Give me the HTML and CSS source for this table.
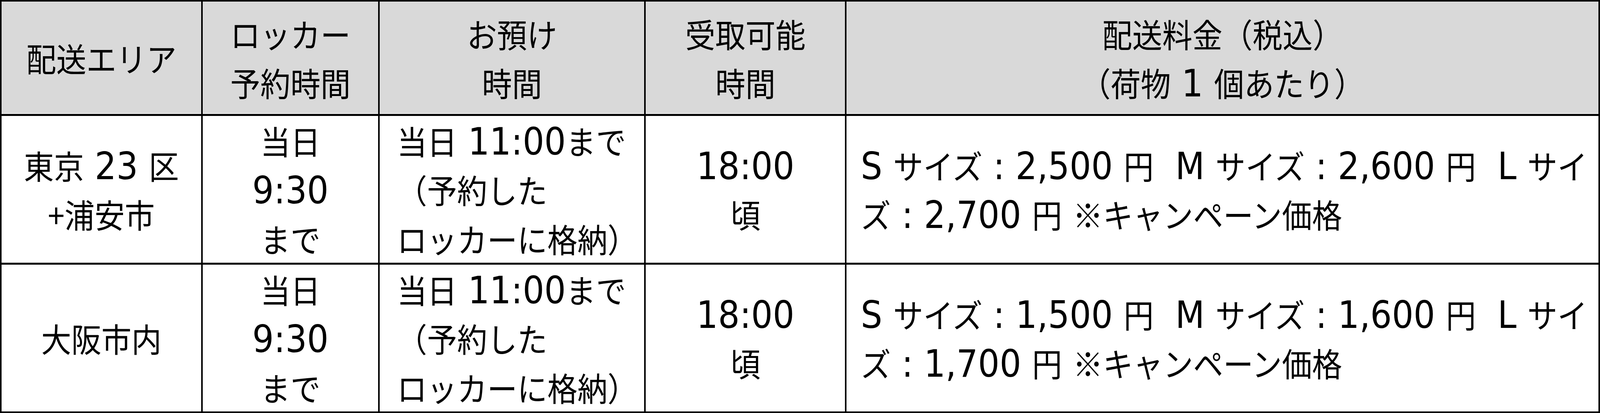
FILE: index.html
```html
<!DOCTYPE html>
<html lang="ja">
<head>
<meta charset="utf-8">
<title>配送料金表</title>
<link rel="stylesheet" href="styles.css">
</head>
<body>
<div class="table" role="table">
  <div class="cell head" role="columnheader"><p>配送エリア</p></div>
  <div class="cell head" role="columnheader"><p>ロッカー<br>予約時間</p></div>
  <div class="cell head" role="columnheader"><p>お預け<br>時間</p></div>
  <div class="cell head" role="columnheader"><p>受取可能<br>時間</p></div>
  <div class="cell head" role="columnheader"><p>配送料金（税込）<br>（荷物<span class="en"> 1 </span>個あたり）</p></div>

  <div class="cell" role="cell"><p>東京<span class="en"> 23 </span>区<br>+浦安市</p></div>
  <div class="cell" role="cell"><p>当日<br><span class="en">9:30</span><br>まで</p></div>
  <div class="cell left" role="cell"><p>当日<span class="en"> 11:00</span>まで<br>（予約した<br>ロッカーに格納）</p></div>
  <div class="cell" role="cell"><p><span class="en">18:00</span><br>頃</p></div>
  <div class="cell left price" role="cell"><p><span class="en">S </span>サイズ<span class="en"> : 2,500 </span>円<span class="en">&nbsp; M </span>サイズ<span class="en"> : 2,600 </span>円<span class="en">&nbsp; L </span>サイ<br>ズ<span class="en"> : 2,700 </span>円<span class="en"> </span>※キャンペーン価格</p></div>

  <div class="cell" role="cell"><p>大阪市内</p></div>
  <div class="cell" role="cell"><p>当日<br><span class="en">9:30</span><br>まで</p></div>
  <div class="cell left" role="cell"><p>当日<span class="en"> 11:00</span>まで<br>（予約した<br>ロッカーに格納）</p></div>
  <div class="cell" role="cell"><p><span class="en">18:00</span><br>頃</p></div>
  <div class="cell left price" role="cell"><p><span class="en">S </span>サイズ<span class="en"> : 1,500 </span>円<span class="en">&nbsp; M </span>サイズ<span class="en"> : 1,600 </span>円<span class="en">&nbsp; L </span>サイ<br>ズ<span class="en"> : 1,700 </span>円<span class="en"> </span>※キャンペーン価格</p></div>
</div>
</body>
</html>
```

FILE: styles.css
```css
html, body {
  margin: 0;
  padding: 0;
  background: #ffffff;
}

body {
  font-family: "Noto Sans CJK JP", "Noto Sans", sans-serif;
  color: #000000;
}

.table {
  box-sizing: border-box;
  width: 100%;
  height: 100vh;
  display: grid;
  grid-template-columns: 531fr 467fr 704fr 530fr 2001fr;
  grid-template-rows: 288fr 376fr 376fr;
  gap: 5px 4px;
  padding: 4px;
  background: #000000;
}

.cell {
  box-sizing: border-box;
  min-width: 0;
  background: #ffffff;
  display: flex;
  align-items: center;
  justify-content: center;
  text-align: center;
  font-size: 1.88vw;
  line-height: 10.78vh;
  overflow: hidden;
}

.cell p {
  margin: 0;
  white-space: nowrap;
  transform: scaleY(1.1);
}

.head {
  background: #d9d9d9;
  box-shadow: inset 0 -3px 0 #e4e4e4;
}

.left {
  justify-content: flex-start;
  text-align: left;
  padding-left: 1.08vw;
}

.price {
  padding-left: 0.89vw;
}

.en {
  font-family: "DejaVu Sans", "Noto Sans", sans-serif;
  font-size: 1.13em;
  line-height: 1;
}
```
